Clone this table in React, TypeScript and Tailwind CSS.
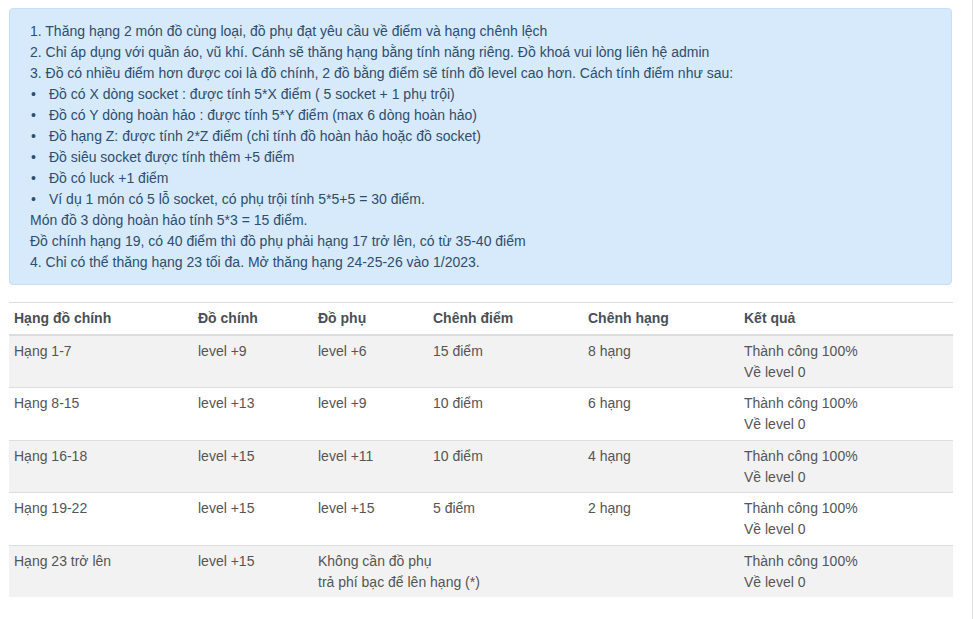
// App.tsx – bảng thăng hạng đồ
const rows = [
  { hang: "Hạng 1-7", chinh: "level +9", phu: ["level +6"], diem: "15 điểm", chenh: "8 hạng" },
  { hang: "Hạng 8-15", chinh: "level +13", phu: ["level +9"], diem: "10 điểm", chenh: "6 hạng" },
  { hang: "Hạng 16-18", chinh: "level +15", phu: ["level +11"], diem: "10 điểm", chenh: "4 hạng" },
  { hang: "Hạng 19-22", chinh: "level +15", phu: ["level +15"], diem: "5 điểm", chenh: "2 hạng" },
  {
    hang: "Hạng 23 trở lên",
    chinh: "level +15",
    phu: ["Không cần đồ phụ", "trả phí bạc để lên hạng (*)"],
    diem: "",
    chenh: ""
  }
];

const bullets = [
  "Đồ có X dòng socket : được tính 5*X điểm ( 5 socket + 1 phụ trội)",
  "Đồ có Y dòng hoàn hảo : được tính 5*Y điểm (max 6 dòng hoàn hảo)",
  "Đồ hạng Z: được tính 2*Z điểm (chỉ tính đồ hoàn hảo hoặc đồ socket)",
  "Đồ siêu socket được tính thêm +5 điểm",
  "Đồ có luck +1 điểm",
  "Ví dụ 1 món có 5 lỗ socket, có phụ trội tính 5*5+5 = 30 điểm."
];

export default function App() {
  return (
    <div
      className="w-[973px] min-h-[619px] border-r border-[#dddddd] bg-white pl-[9px] pr-[20px] pt-[8px] text-[14px] leading-[21px]"
      style={{ fontFamily: '"Liberation Sans", Arial, sans-serif' }}
    >
      {/* Ghi chú */}
      <div className="rounded-[4px] border border-[#c4dff7] bg-[#d6eafc] px-[20px] pt-[12px] pb-[11px] text-[#2f4d6d]">
        <p>1. Thăng hạng 2 món đồ cùng loại, đồ phụ đạt yêu cầu về điểm và hạng chênh lệch</p>
        <p>2. Chỉ áp dụng với quần áo, vũ khí. Cánh sẽ thăng hạng bằng tính năng riêng. Đồ khoá vui lòng liên hệ admin</p>
        <p>3. Đồ có nhiều điểm hơn được coi là đồ chính, 2 đồ bằng điểm sẽ tính đồ level cao hơn. Cách tính điểm như sau:</p>
        <ul>
          {bullets.map((b) => (
            <li key={b} className="flex">
              <span className="w-[19px] shrink-0 pl-[1px]">•</span>
              <span>{b}</span>
            </li>
          ))}
        </ul>
        <p>Món đồ 3 dòng hoàn hảo tính 5*3 = 15 điểm.</p>
        <p>Đồ chính hạng 19, có 40 điểm thì đồ phụ phải hạng 17 trở lên, có từ 35-40 điểm</p>
        <p>4. Chỉ có thể thăng hạng 23 tối đa. Mở thăng hạng 24-25-26 vào 1/2023.</p>
      </div>

      {/* Bảng */}
      <table className="mt-[17px] w-[944px] table-fixed border-collapse text-left text-[#555555]">
        <colgroup>
          <col className="w-[184px]" />
          <col className="w-[120px]" />
          <col className="w-[115px]" />
          <col className="w-[155px]" />
          <col className="w-[156px]" />
          <col className="w-[214px]" />
        </colgroup>
        <thead>
          <tr className="border-t border-[#dddddd] border-b-2 border-b-[#dddddd]">
            <th className="px-[5px] pt-[5px] pb-[4.5px] font-bold text-[#4a4f57]">Hạng đồ chính</th>
            <th className="px-[5px] pt-[5px] pb-[4.5px] font-bold text-[#4a4f57]">Đồ chính</th>
            <th className="px-[5px] pt-[5px] pb-[4.5px] font-bold text-[#4a4f57]">Đồ phụ</th>
            <th className="px-[5px] pt-[5px] pb-[4.5px] font-bold text-[#4a4f57]">Chênh điểm</th>
            <th className="px-[5px] pt-[5px] pb-[4.5px] font-bold text-[#4a4f57]">Chênh hạng</th>
            <th className="px-[5px] pt-[5px] pb-[4.5px] font-bold text-[#4a4f57]">Kết quả</th>
          </tr>
        </thead>
        <tbody>
          {rows.map((r, i) => (
            <tr
              key={r.hang}
              className={`${i % 2 === 0 ? "bg-[#f2f2f2]" : "bg-white"} ${i < rows.length - 1 ? "border-b border-[#dddddd]" : ""}`}
            >
              <td className="px-[5px] pt-[5px] pb-[4.5px] align-top">{r.hang}</td>
              <td className="px-[5px] pt-[5px] pb-[4.5px] align-top">{r.chinh}</td>
              <td className="px-[5px] pt-[5px] pb-[4.5px] align-top" colSpan={r.diem ? 1 : 3}>
                {r.phu.map((p) => (
                  <div key={p}>{p}</div>
                ))}
              </td>
              {r.diem && <td className="px-[5px] pt-[5px] pb-[4.5px] align-top">{r.diem}</td>}
              {r.diem && <td className="px-[5px] pt-[5px] pb-[4.5px] align-top">{r.chenh}</td>}
              <td className="px-[5px] pt-[5px] pb-[4.5px] align-top">
                <div>Thành công 100%</div>
                <div>Về level 0</div>
              </td>
            </tr>
          ))}
        </tbody>
      </table>
    </div>
  );
}
